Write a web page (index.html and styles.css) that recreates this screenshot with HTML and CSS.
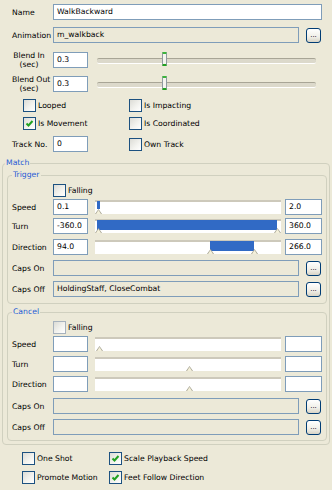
FILE: index.html
```html
<!DOCTYPE html>
<html lang="en">
<head>
    <meta charset="UTF-8">
    <title>Animation Properties</title>
    <link rel="stylesheet" href="styles.css">
</head>
<body>
    <div class="panel">
        <div class="row r-name">
            <span class="lbl">Name</span>
            <div class="field grow">WalkBackward</div>
        </div>
        <div class="row r-anim">
            <span class="lbl">Animation</span>
            <div class="field ro grow">m_walkback</div>
            <button class="more">...</button>
        </div>
        <div class="row r-blend1">
            <span class="lbl two">Blend In<br>(sec)</span>
            <div class="field short">0.3</div>
            <div class="track"><span class="thumb"></span></div>
        </div>
        <div class="row r-blend2">
            <span class="lbl two">Blend Out<br>(sec)</span>
            <div class="field short">0.3</div>
            <div class="track"><span class="thumb"></span></div>
        </div>

        <div class="checks top-checks">
            <label class="chk"><span class="cb"></span>Looped</label>
            <label class="chk"><span class="cb"></span>Is Impacting</label>
            <label class="chk"><span class="cb on"><svg viewBox="0 0 11 11"><path d="M2.5 5.5 L4.5 7.5 L8.5 3"/></svg></span>Is Movement</label>
            <label class="chk"><span class="cb"></span>Is Coordinated</label>
        </div>

        <div class="row r-track">
            <span class="lbl">Track No.</span>
            <div class="field short">0</div>
            <label class="chk own"><span class="cb"></span>Own Track</label>
        </div>

        <fieldset class="group match">
            <legend>Match</legend>

            <fieldset class="group sub trigger">
                <legend>Trigger</legend>
                <label class="chk falling"><span class="cb"></span>Falling</label>
                <div class="grow-row r1">
                    <span class="lbl">Speed</span>
                    <div class="field short">0.1</div>
                    <div class="range">
                        <span class="fill" style="left:2px;width:3px;height:8px"></span>
                        <span class="tri" style="left:0"></span>
                    </div>
                    <div class="field end">2.0</div>
                </div>
                <div class="grow-row r2">
                    <span class="lbl">Turn</span>
                    <div class="field short">-360.0</div>
                    <div class="range">
                        <span class="fill" style="left:2px;width:180px"></span>
                        <span class="tri" style="left:0"></span>
                        <span class="tri" style="left:179px"></span>
                    </div>
                    <div class="field end">360.0</div>
                </div>
                <div class="grow-row r3">
                    <span class="lbl">Direction</span>
                    <div class="field short">94.0</div>
                    <div class="range">
                        <span class="fill" style="left:115px;width:44px"></span>
                        <span class="tri" style="left:112px"></span>
                        <span class="tri" style="left:156px"></span>
                    </div>
                    <div class="field end">266.0</div>
                </div>
                <div class="grow-row r3">
                    <span class="lbl">Caps On</span>
                    <div class="field ro grow"></div>
                    <button class="more">...</button>
                </div>
                <div class="grow-row r3">
                    <span class="lbl">Caps Off</span>
                    <div class="field ro grow">HoldingStaff, CloseCombat</div>
                    <button class="more">...</button>
                </div>
            </fieldset>

            <fieldset class="group sub cancel">
                <legend>Cancel</legend>
                <label class="chk falling"><span class="cb off"></span>Falling</label>
                <div class="grow-row r1">
                    <span class="lbl">Speed</span>
                    <div class="field short"></div>
                    <div class="range"><span class="tri" style="left:1px"></span></div>
                    <div class="field end"></div>
                </div>
                <div class="grow-row r4">
                    <span class="lbl">Turn</span>
                    <div class="field short"></div>
                    <div class="range"><span class="tri" style="left:91px"></span></div>
                    <div class="field end"></div>
                </div>
                <div class="grow-row r4">
                    <span class="lbl">Direction</span>
                    <div class="field short"></div>
                    <div class="range"><span class="tri" style="left:91px"></span></div>
                    <div class="field end"></div>
                </div>
                <div class="grow-row r5">
                    <span class="lbl">Caps On</span>
                    <div class="field ro grow"></div>
                    <button class="more">...</button>
                </div>
                <div class="grow-row r6">
                    <span class="lbl">Caps Off</span>
                    <div class="field ro grow"></div>
                    <button class="more">...</button>
                </div>
            </fieldset>
        </fieldset>

        <div class="checks bottom-checks">
            <label class="chk"><span class="cb"></span>One Shot</label>
            <label class="chk"><span class="cb on"><svg viewBox="0 0 11 11"><path d="M2.5 5.5 L4.5 7.5 L8.5 3"/></svg></span>Scale Playback Speed</label>
            <label class="chk"><span class="cb"></span>Promote Motion</label>
            <label class="chk"><span class="cb on"><svg viewBox="0 0 11 11"><path d="M2.5 5.5 L4.5 7.5 L8.5 3"/></svg></span>Feet Follow Direction</label>
        </div>
    </div>
</body>
</html>
```

FILE: styles.css
```css
* {
    box-sizing: border-box;
}

body {
    margin: 0;
    background-color: #ece9d8;
    font-family: "DejaVu Sans", Verdana, sans-serif;
    font-size: 7.7px;
    color: #000;
}

.panel {
    width: 332px;
    height: 490px;
    padding-top: 4px;
    overflow: hidden;
}

/* top rows */
.row {
    display: flex;
    align-items: center;
    height: 16px;
    padding: 0 10px 0 12px;
}

.r-anim { margin-top: 7px; }
.r-blend1 { margin-top: 9px; }
.r-blend2 { margin-top: 8px; }
.r-track { margin-top: 6px; }

.lbl {
    width: 41px;
    flex: none;
    white-space: nowrap;
}

.lbl.two {
    width: 34px;
    margin-right: 7px;
    text-align: center;
    line-height: 9px;
}

.field {
    height: 16px;
    border: 1px solid #7f9db9;
    background-color: #fff;
    padding: 0 3px;
    line-height: 14px;
    white-space: nowrap;
    overflow: hidden;
}

.field.ro {
    background-color: #ece9d8;
}

.grow {
    flex: 1;
}

.short {
    width: 35px;
    flex: none;
}

.end {
    width: 37px;
    flex: none;
}

.more {
    width: 15px;
    height: 15px;
    flex: none;
    margin: 0 1px 0 7px;
    padding: 0;
    border: 1px solid #003c74;
    border-radius: 3px;
    background: linear-gradient(#ffffff, #f0efe8 60%, #d8d4c6);
    font-family: inherit;
    font-size: 7px;
    line-height: 12px;
    color: #000;
}

/* blend slider */
.track {
    flex: 1;
    height: 16px;
    margin: 0 6px 0 9px;
    position: relative;
}

.track::before {
    content: '';
    position: absolute;
    left: 0;
    right: 0;
    top: 6px;
    height: 4px;
    background-color: #dcd9cb;
    border-top: 1px solid #a8a596;
    border-bottom: 1px solid #fff;
    border-radius: 2px;
}

.thumb {
    position: absolute;
    left: 65px;
    top: 0;
    width: 5px;
    height: 14px;
    background-color: #f5f4ef;
    border: 1px solid #8f9a9f;
    border-top: 2px solid #3cb43c;
    border-bottom: 2px solid #21a121;
    border-radius: 1px;
}

/* checkboxes */
.checks {
    display: grid;
}

.top-checks {
    grid-template-columns: 106px auto;
    row-gap: 5px;
    padding-left: 23px;
    margin-top: 7px;
}

.bottom-checks {
    grid-template-columns: 87px auto;
    row-gap: 6px;
    padding-left: 22px;
    margin-top: 7px;
}

.chk {
    display: flex;
    align-items: center;
    gap: 2px;
    height: 13px;
    white-space: nowrap;
}

.cb {
    width: 13px;
    height: 13px;
    flex: none;
    border: 1px solid #1c5180;
    background: linear-gradient(135deg, #dcdcd6, #f4f4f0 60%, #ffffff);
}

.cb.off {
    border-color: #a7b2bd;
}

.cb svg {
    display: block;
    width: 11px;
    height: 11px;
}

.cb path {
    fill: none;
    stroke: #21a121;
    stroke-width: 2;
}

.own {
    margin-left: 41px;
}

/* group boxes */
.group {
    margin: 0;
    border: 1px solid #d0d0bf;
    border-radius: 4px;
    min-inline-size: 0;
}

.group legend {
    color: #1f5bd6;
    padding: 0 1px;
    line-height: 10px;
}

.match {
    margin: 6px 2px 0 2px;
    padding: 2px 2px 3px 4px;
}

.match > legend {
    margin-left: -2px;
}

.sub {
    padding: 0 4px 6px 4px;
}

.cancel {
    margin-top: 3px;
    padding-bottom: 5px;
}

.falling {
    margin: 4px 0 0 41px;
}

.grow-row {
    display: flex;
    align-items: center;
    height: 16px;
}

.r1 { margin-top: 2px; }
.r2 { margin-top: 3px; }
.r3 { margin-top: 5px; }
.r4 { margin-top: 4px; }
.r5 { margin-top: 6px; }
.r6 { margin-top: 5px; }

.range {
    flex: 1;
    height: 14px;
    margin: 0 4px 0 7px;
    background-color: #fff;
    border-top: 2px solid #cdc9bb;
    position: relative;
}

.fill {
    position: absolute;
    top: -1px;
    height: 10px;
    background-color: #316ac5;
}

.tri {
    position: absolute;
    bottom: 0;
    width: 7px;
    height: 5px;
    background: linear-gradient(#a6a392, #a6a392);
    clip-path: polygon(50% 0, 100% 100%, 0 100%);
}

.tri::after {
    content: '';
    position: absolute;
    left: 1px;
    top: 1px;
    width: 5px;
    height: 4px;
    background-color: #f4f0da;
    clip-path: polygon(50% 0, 100% 100%, 0 100%);
}
```
